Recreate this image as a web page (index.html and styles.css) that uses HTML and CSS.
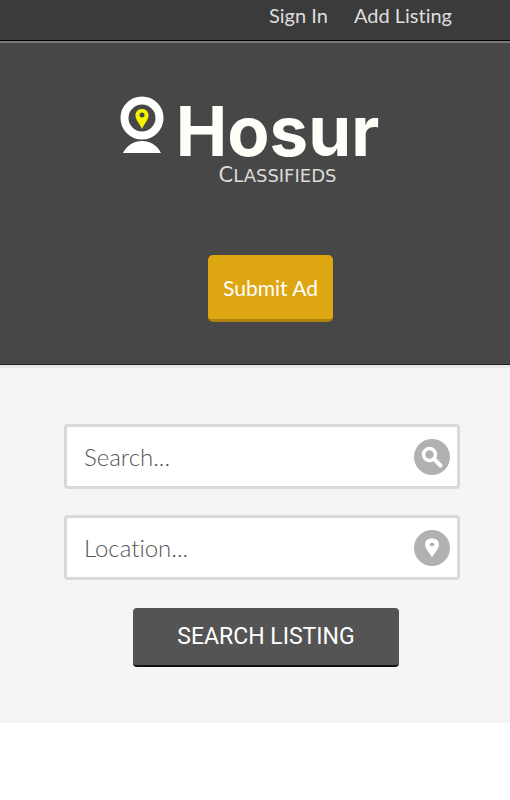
FILE: index.html
```
<!DOCTYPE html>
<html lang="en">
<head>
    <meta charset="UTF-8">
    <meta name="viewport" content="width=device-width, initial-scale=1.0">
    <title>Hosur Classifieds</title>
    <link rel="stylesheet" href="styles.css">
</head>
<body>
    <nav class="topbar">
        <a href="#">Sign In</a>
        <a href="#">Add Listing</a>
    </nav>

    <header class="header">
        <a class="logo" href="#">
            <svg class="logo-icon" viewBox="0 0 44 58" width="44" height="58" aria-hidden="true">
                <circle cx="22" cy="22" r="17.500" fill="none" stroke="#fff" stroke-width="8"/>
                <path d="M22 33C20 28 15.500 24 15.500 19.500C15.500 15.500 18 13 22 13S28.500 15.500 28.500 19.500C28.500 24 24 28 22 33Z" fill="#f4f400"/>
                <circle cx="22" cy="19" r="2.500" fill="#474747"/>
                <path d="M3 57C7 49 14 45 22 45S37 49 41 57Z" fill="#fff"/>
            </svg>
            <span class="logo-text">
                <span class="logo-name">Hosur</span>
                <span class="logo-tag">Classifieds</span>
            </span>
        </a>
        <div class="submit-row">
            <button type="button" class="btn submit">Submit Ad</button>
        </div>
    </header>

    <form class="search-form">
        <label class="field">
            <input type="text" placeholder="Search..." aria-label="Search">
            <svg class="field-icon" viewBox="0 0 36 36" width="36" height="36" aria-hidden="true">
                <circle cx="18" cy="18" r="18" fill="#b1b1b1"/>
                <circle cx="15.500" cy="15.500" r="6" fill="none" stroke="#fff" stroke-width="3.500"/>
                <path d="M20 20L26.500 26.500" stroke="#fff" stroke-width="4" stroke-linecap="round"/>
            </svg>
        </label>
        <label class="field">
            <input type="text" placeholder="Location..." aria-label="Location">
            <svg class="field-icon" viewBox="0 0 36 36" width="36" height="36" aria-hidden="true">
                <circle cx="18" cy="18" r="18" fill="#b1b1b1"/>
                <path d="M18 27.500C16 23 11 19 11 14.500C11 10.500 14 8.500 18 8.500S25 10.500 25 14.500C25 19 20 23 18 27.500Z" fill="#fff"/>
                <ellipse cx="18" cy="14.500" rx="2.500" ry="1.700" fill="#b1b1b1"/>
            </svg>
        </label>
        <button type="submit" class="btn search">SEARCH LISTING</button>
    </form>
</body>
</html>
```
FILE: styles.css
```
* {
    box-sizing: border-box;
}
body {
    margin: 0;
    background-color: #fff;
    font-family: Lato, "Liberation Sans", sans-serif;
    font-variant-ligatures: none;
}
.topbar {
    display: flex;
    justify-content: flex-end;
    gap: 26px;
    height: 41px;
    padding: 3px 58px 0 0;
    background-color: #3b3b3b;
    border-bottom: 1px solid #000;
}
.topbar a {
    color: #dedede;
    font-size: 20px;
    line-height: 24px;
    text-decoration: none;
}
.header {
    padding: 53px 0 42px;
    background-color: #474747;
    border-top: 2px solid #777;
    border-bottom: 1px solid #222;
}
.logo {
    display: flex;
    justify-content: center;
    gap: 12px;
    padding-right: 11px;
    text-decoration: none;
}
.logo-text {
    display: flex;
    flex-direction: column;
}
.logo-name {
    color: #fffef8;
    font-family: Inter, sans-serif;
    font-size: 69px;
    font-weight: 700;
    line-height: 70px;
}
.logo-tag {
    color: #dcdcd8;
    font-family: "DejaVu Sans", sans-serif;
    font-size: 18px;
    line-height: 18px;
    text-align: center;
    text-transform: uppercase;
}
.logo-tag::first-letter {
    font-size: 21px;
    line-height: 18px;
}
.submit-row {
    display: flex;
    justify-content: center;
    padding: 70px 0 0 31px;
}
.btn {
    border: 0;
    color: #fff;
    cursor: pointer;
}
.submit {
    height: 67px;
    padding: 0 15px;
    background-color: #dea610;
    border-bottom: 3px solid #b0820e;
    border-radius: 5px;
    font-family: Lato, sans-serif;
    font-size: 21px;
}
.search-form {
    display: flex;
    flex-direction: column;
    gap: 26px;
    padding: 56px 50px 56px 64px;
    background-color: #f5f5f5;
    border-top: 3px solid #e8e8e8;
}
.field {
    display: flex;
    align-items: center;
    padding: 0 7px 0 17px;
    height: 65px;
    background-color: #fff;
    border: 3px solid #d9d9d9;
    border-radius: 4px;
}
.field input {
    flex: 1;
    min-width: 0;
    padding: 0;
    border: 0;
    outline: 0;
    background: none;
    color: #555;
    font-family: Lato, sans-serif;
    font-size: 24px;
    font-weight: 300;
    font-variant-ligatures: none;
}
.field input::placeholder {
    color: #555;
}
.search {
    align-self: center;
    height: 59px;
    margin: 2px 0 0 8px;
    padding: 0 44px;
    background-color: #545454;
    border-bottom: 2px solid #111;
    border-radius: 4px;
    font-family: Roboto, sans-serif;
    font-size: 23px;
}
```
